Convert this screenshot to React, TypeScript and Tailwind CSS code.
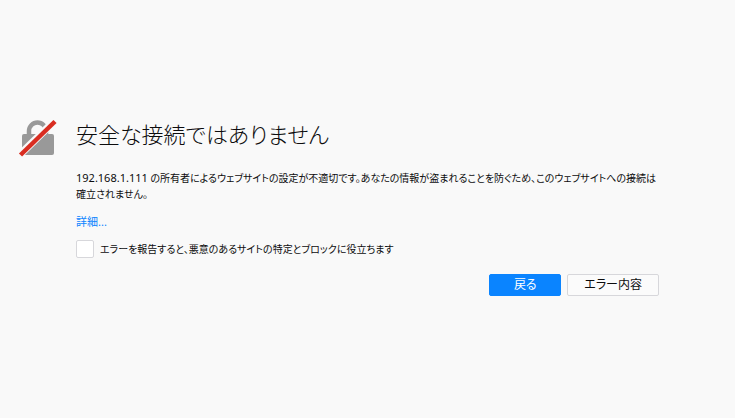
import { useState } from 'react';

function InsecureLockIcon() {
  return (
    <svg className="mt-1.5 h-10 w-10 shrink-0" viewBox="0 0 40 40" fill="none" aria-hidden="true">
      <path d="M11 18v-5a8.5 8.5 0 0 1 17 0v5" stroke="#999999" strokeWidth="4.5" />
      <rect x="4" y="16" width="32" height="21" rx="2" fill="#999999" />
      <path d="M0 38.5 38 1.5" stroke="#f9f9f9" strokeWidth="7.5" />
      <path d="M2.5 37 37 3.5" stroke="#d92d21" strokeWidth="4.5" />
    </svg>
  );
}

export default function App() {
  const [reportErrors, setReportErrors] = useState(false);

  return (
    <div className="min-h-screen bg-[#f9f9f9] pt-28 pr-19 pl-4.5 font-['Noto_Sans','Noto_Sans_CJK_JP',sans-serif] text-[10px] text-[#0c0c0d] [font-feature-settings:'palt']">
      <main className="flex items-start gap-4.5" lang="ja">
        <InsecureLockIcon />
        <div className="min-w-0 flex-1">
          <h1 className="pt-1.5 text-[22px] leading-8 font-light">安全な接続ではありません</h1>

          <p className="mt-5 leading-4">
            <span className="text-[11px]">192.168.1.111</span> の所有者によるウェブサイトの設定が不適切です。あなたの情報が盗まれることを防ぐため、このウェブサイトへの接続は確立されません。
          </p>

          <p className="mt-3 text-[11px] leading-4">
            <a href="#" className="text-[#0a84ff] hover:underline">詳細...</a>
          </p>

          {/* Error reporting */}
          <label className="mt-2.5 flex items-center gap-1.5 leading-4">
            <input
              type="checkbox"
              checked={reportErrors}
              onChange={(e) => setReportErrors(e.target.checked)}
              className="h-4.5 w-4.5 appearance-none rounded-xs border border-[#d7d7db] bg-white checked:bg-[#0a84ff]"
            />
            エラーを報告すると、悪意のあるサイトの特定とブロックに役立ちます
          </label>

          <div className="mt-4 flex justify-end gap-1.5 text-[12px] leading-4">
            <button type="button" className="min-w-18 rounded-xs border border-[#0a84ff] bg-[#0a84ff] px-4 py-0.5 text-white">
              戻る
            </button>
            <button type="button" className="rounded-xs border border-[#d7d7db] bg-[#fbfbfb] px-4 py-0.5">
              エラー内容
            </button>
          </div>
        </div>
      </main>
    </div>
  );
}
